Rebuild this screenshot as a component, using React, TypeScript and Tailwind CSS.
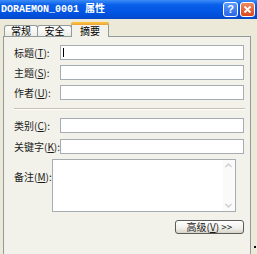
import React from 'react';

const cjk = { fontFamily: '"Noto Sans CJK SC", "Liberation Sans", sans-serif' };

const Label: React.FC<{ text: string; hot: string }> = ({ text, hot }) => (
  <span className="w-[46px] shrink-0 whitespace-nowrap text-[10px] leading-none text-[#1a1a1a]" style={cjk}>
    {text}(<span className="underline">{hot}</span>):
  </span>
);

const Field: React.FC<{ label: string; hot: string; caret?: boolean; className?: string }> = ({ label, hot, caret, className }) => (
  <div className={`flex items-center h-[15px] ${className ?? ''}`}>
    <Label text={label} hot={hot} />
    <div className="h-[15px] w-[184px] border border-[#A5ACB2] bg-white flex items-center">
      {caret && <span className="ml-[2px] w-px h-[9px] bg-black" />}
    </div>
  </div>
);

const Chevron: React.FC<{ up?: boolean }> = ({ up }) => (
  <svg width="7" height="5" viewBox="0 0 7 5" className="block">
    <path d={up ? 'M0.5 4 L3.5 1 L6.5 4' : 'M0.5 1 L3.5 4 L6.5 1'} fill="none" stroke="#C9CED3" strokeWidth="1.3" />
  </svg>
);

const App: React.FC = () => {
  return (
    <div className="relative w-[257px] h-[254px] overflow-hidden bg-[#ECE9D8]">
      {/* title bar */}
      <div className="h-[19px] flex items-center justify-between pl-[1px] pr-[2px] bg-[linear-gradient(#3C8CF7,#0A5FEA_25%,#0053E1_70%,#0448C9)]">
        <span className="text-white text-[10px] font-bold leading-none whitespace-nowrap" style={{ fontFamily: '"Liberation Mono", "Noto Sans CJK SC", monospace' }}>
          DORAEMON_0001 属性
        </span>
        <div className="flex items-center gap-[2px]">
          <div className="w-[15px] h-[15px] rounded-[3px] border border-white bg-[linear-gradient(#5C9BFF,#2A66E8)] flex items-center justify-center text-white text-[11px] font-bold leading-none" style={{ fontFamily: '"Liberation Sans", sans-serif' }}>
            ?
          </div>
          <div className="w-[15px] h-[15px] rounded-[3px] border border-white bg-[linear-gradient(#F08A62,#D8471E)] flex items-center justify-center">
            <svg width="9" height="9" viewBox="0 0 9 9">
              <path d="M1.5 1.5 L7.5 7.5 M7.5 1.5 L1.5 7.5" stroke="white" strokeWidth="1.8" />
            </svg>
          </div>
        </div>
      </div>

      {/* tabs */}
      <div className="mt-[3px] ml-[4px] h-[14px] flex items-end">
        <div className="h-[11px] w-[34px] border border-b-0 border-[#919B9C] rounded-t-[3px] bg-[linear-gradient(#FFFFFF,#EDECE5)] flex items-center justify-center text-[10px] leading-none" style={cjk}>
          常规
        </div>
        <div className="h-[11px] w-[35px] -ml-px border border-b-0 border-[#919B9C] rounded-t-[3px] bg-[linear-gradient(#FFFFFF,#EDECE5)] flex items-center justify-center text-[10px] leading-none" style={cjk}>
          安全
        </div>
        <div className="relative z-10 -mb-px h-[15px] w-[38px] -ml-px border border-b-0 border-[#919B9C] rounded-t-[3px] bg-[#F3F2EA] flex flex-col">
          <div className="h-[3px] -mx-px -mt-px rounded-t-[3px] bg-[linear-gradient(#FFC73C,#E9A23A)]" />
          <div className="flex-1 flex items-center justify-center text-[10px] leading-none" style={cjk}>
            摘要
          </div>
        </div>
      </div>

      {/* panel */}
      <div className="ml-[3px] w-[248px] h-[230px] border border-[#919B9C] bg-[#F3F2EA] pt-[8px] pl-[10px] pr-[5px]">
        <Field label="标题" hot="T" caret />
        <Field label="主题" hot="S" className="mt-[5px]" />
        <Field label="作者" hot="U" className="mt-[5px]" />

        <div className="mt-[8px] h-px bg-[#C5C2B2] border-b border-white box-content" />

        <Field label="类别" hot="C" className="mt-[8px]" />
        <Field label="关键字" hot="K" className="mt-[6px]" />

        <div className="mt-[5px] flex items-start">
          <div className="pt-[4px]">
            <Label text="备注" hot="M" />
          </div>
          <div className="h-[53px] w-[184px] border border-[#A5ACB2] bg-white flex justify-end">
            <div className="w-[12px] flex flex-col items-center justify-between py-[3px] bg-[#FAFAF8]">
              <Chevron up />
              <Chevron />
            </div>
          </div>
        </div>

        <div className="mt-[8px] flex justify-end pr-[1px]">
          <button className="h-[14px] w-[69px] rounded-[3px] border border-[#5B5B5B] bg-[linear-gradient(#FFFFFF,#F0EFEA_60%,#D6D3C8)] flex items-center justify-center text-[10px] leading-none text-[#1a1a1a]" style={cjk}>
            高级(<span className="underline">V</span>)&nbsp;&gt;&gt;
          </button>
        </div>
      </div>

      <div className="absolute left-[254px] top-[246px] w-[2px] h-[2px] bg-black" />
    </div>
  );
};

export default App;
